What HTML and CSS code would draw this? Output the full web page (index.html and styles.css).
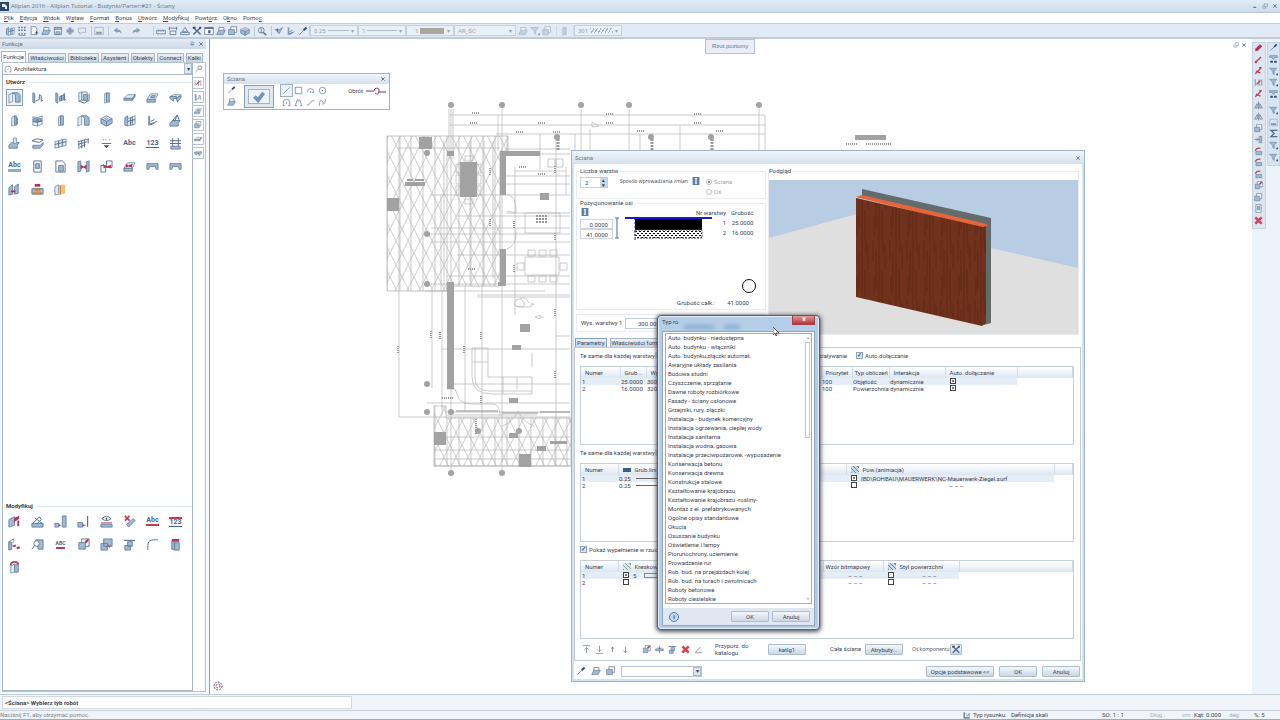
FILE: index.html
```html
<!DOCTYPE html>
<html lang="pl">
<head>
    <meta charset="UTF-8">
    <meta name="viewport" content="width=device-width, initial-scale=1.0">
    <title>Allplan 2016 - Ściany</title>
    <link rel="stylesheet" href="styles.css">
</head>
<body>
    <!-- icon set -->
    <svg class="defs" aria-hidden="true">
        <symbol id="wall" viewBox="0 0 14 14"><path class="p" d="M1 4l4-2v9l-4 2z"/><path class="b" d="M5 2h6l2 2v8h-5V4z"/></symbol>
        <symbol id="poly" viewBox="0 0 14 14"><path class="b" d="M2 2l2 1v10l-2-1z"/><path class="l" d="M5 11l4-2V4l2 1v6l2-1"/></symbol>
        <symbol id="polywin" viewBox="0 0 14 14"><path class="b" d="M2 2l2 1v10l-2-1zM6 6l5-2v5l-5 2z"/><path class="l" d="M11 2v8l2-1M8 5v5"/></symbol>
        <symbol id="frame" viewBox="0 0 14 14"><path class="p" d="M2 2l3-1v9l-3 1zM5 1h6v9H5z"/><path class="b" d="M7 4h4v6H7z"/><path class="l" d="M2 11l6 2 5-3V3"/></symbol>
        <symbol id="column" viewBox="0 0 14 14"><path class="p" d="M5 3l2-1v10l-2 1z"/><path class="b" d="M7 2h3v10H7z"/></symbol>
        <symbol id="slab" viewBox="0 0 14 14"><path class="p" d="M1 8l4-4h8l-3 4z"/><path class="b" d="M1 8h9v2H1zM10 8l3-4v2l-3 4z"/></symbol>
        <symbol id="slabhole" viewBox="0 0 14 14"><path class="p" d="M1 9l4-6h8l-3 6z"/><path class="b" d="M1 9h9v3H1zM5 7l1-2h4L9 7z"/></symbol>
        <symbol id="beam" viewBox="0 0 14 14"><path class="p" d="M1 6l4-2h8L9 7z"/><path class="b" d="M1 6h7v2H5v3L1 8zM8 8l5-3v2l-4 5z"/></symbol>
        <symbol id="door" viewBox="0 0 14 14"><path class="p" d="M4 4l3-2v10l-3 1z"/><path class="b" d="M7 2h2v10H7z"/><path class="l" d="M10 4v7"/></symbol>
        <symbol id="window" viewBox="0 0 14 14"><path class="p" d="M2 3l5 1v9l-5-1zM7 4l5-2v9l-5 2z"/><path class="b" d="M3 5h3v3H3zM8 5h3v3H8z"/><path class="l" d="M2 8l5 1 5-2"/></symbol>
        <symbol id="cube" viewBox="0 0 14 14"><path class="p" d="M1 5l6-3 6 3-6 3z"/><path class="b" d="M1 5l6 3v5l-6-3zM13 5l-6 3v5l6-3z"/><path class="p" d="M5 5l2-1 2 1-2 1z"/></symbol>
        <symbol id="facade" viewBox="0 0 14 14"><path class="b" d="M2 4l3-2v11l-3-1z"/><path class="p" d="M5 5l8-3v9l-8 2z"/><path class="l" d="M8 4v8M10 3v9M5 8l8-2"/></symbol>
        <symbol id="corner" viewBox="0 0 14 14"><path class="b" d="M3 2l1 1v7l-1 2z"/><path class="l" d="M4 11l8-3M5 8l4-2M4 12l5-2"/></symbol>
        <symbol id="roof" viewBox="0 0 14 14"><path class="b" d="M1 10l3-3h8l-2 3v3H1z"/><path class="l" d="M3 8l6-7 2 6M9 1L6 8"/></symbol>
        <symbol id="found" viewBox="0 0 14 14"><path class="b" d="M1 9l3-3h8l-2 3v3H1z"/><path class="p" d="M6 1h3v6H6z"/></symbol>
        <symbol id="plate" viewBox="0 0 14 14"><path class="l" d="M1 4l5-2 7 1-4 3z"/><path class="b" d="M2 9h8l3-3v2l-3 4H2z"/></symbol>
        <symbol id="mesh" viewBox="0 0 14 14"><path class="p" d="M1 5l12-3v7L1 12z"/><path class="l" d="M1 8l12-3M5 4v7M9 3v7"/></symbol>
        <symbol id="mesh2" viewBox="0 0 14 14"><path class="l" d="M1 5l12-3M1 8l10-3M2 5v8M5 4v8M8 3v8M12 2v5M3 11l6-3"/></symbol>
        <symbol id="level" viewBox="0 0 14 14"><path class="l" d="M2 7h10M3 3h1M6 3h1M10 3h1"/><path class="k" d="M4 9h6l-3 3z"/></symbol>
        <symbol id="grid" viewBox="0 0 14 14"><path class="l" d="M4 1v9M10 1v9M1 4h12M1 7h12"/><path class="b" d="M2 10h10v3H2z"/></symbol>
        <symbol id="sheet" viewBox="0 0 14 14"><path class="w" d="M3 1h8v12H3z"/><path class="b" d="M5 4h4v5H5z"/></symbol>
        <symbol id="sheet2" viewBox="0 0 14 14"><path class="w" d="M2 1h7l3 3v9H2z"/><path class="b" d="M5 6h5v6H5z"/></symbol>
        <symbol id="link" viewBox="0 0 14 14"><path class="b" d="M1 2l3-1v11l-3 1zM10 2l3-1v11l-3 1z"/><path class="r" d="M4 5l3 2 3-2v5L7 8l-3 2z"/></symbol>
        <symbol id="link2" viewBox="0 0 14 14"><path class="w" d="M7 1h6v7H7zM1 6h5v7H1z"/><path class="r" d="M3 4l4 3 5-2v4L7 8 4 9z"/></symbol>
        <symbol id="link3" viewBox="0 0 14 14"><path class="p" d="M1 9l4-6h8l-3 6z"/><path class="b" d="M1 9h9v3H1z"/><path class="r" d="M3 4l3 2 4-2v4L6 7 3 8z"/></symbol>
        <symbol id="bridge" viewBox="0 0 14 14"><path class="b" d="M1 4h12v6h-2l-1-3H4l-1 3H1z"/></symbol>
        <symbol id="wallred" viewBox="0 0 14 14"><path class="b" d="M1 5l4-3v10l-4 1zM7 4l4-3v10l-4 1z"/><path class="r" d="M3 8h5v2H3z"/></symbol>
        <symbol id="brick" viewBox="0 0 14 14"><path class="r" d="M4 1h6v3H4z"/><path class="b" d="M1 6h12v6H1z"/><path class="o" d="M4 6h6v3H4zM2 10h10v2H2z"/></symbol>
        <symbol id="layers" viewBox="0 0 14 14"><path class="p" d="M1 4l4-2v10l-4 1z"/><path class="o" d="M6 3l2-1v10l-2 1z"/><path class="y" d="M8 2h4v9l-4 1z"/></symbol>
        <symbol id="wallmod" viewBox="0 0 14 14"><path class="b" d="M1 5l6-3v9l-6 2z"/><path class="r" d="M7 3l5-2v3L6 8zM10 6h2v6h-2z"/></symbol>
        <symbol id="wallmod2" viewBox="0 0 14 14"><path class="p" d="M1 4l5-3v3L4 6v4l-3 3z"/><path class="b" d="M1 4l3 1v7l-3 1z"/><path class="r" d="M5 8l3-1 1 2-3 1zM9 10l3-1 1 2-3 1z"/></symbol>
        <symbol id="rebuild" viewBox="0 0 14 14"><path class="b" d="M1 9h12v4H1z"/><path class="l" d="M1 10l8-8 2 3-5 5M4 3l8 6"/></symbol>
        <symbol id="stretch" viewBox="0 0 14 14"><path class="b" d="M9 1h4v12H9zM1 9h4v4H1z"/><path class="r" d="M5 10l3 1-3 1z"/></symbol>
        <symbol id="stretch2" viewBox="0 0 14 14"><path class="k" d="M11 1h1v12h-1z"/><path class="b" d="M1 8h5v5H1z"/><path class="r" d="M6 10l4 1-4 1z"/></symbol>
        <symbol id="eye" viewBox="0 0 14 14"><path class="l" d="M2 4q5-5 10 0-5 4-10 0"/><circle class="k" cx="7" cy="4" r="1"/><path class="r" d="M1 8h12v1H1z"/><path class="b" d="M1 10h12v3H1z"/></symbol>
        <symbol id="delmesh" viewBox="0 0 14 14"><path class="rl" d="M2 1l5 5M7 1L2 6"/><path class="b" d="M4 10l7-6 2 2-7 7z"/></symbol>
        <symbol id="find" viewBox="0 0 14 14"><path class="b" d="M5 2h8v10H8z"/><circle class="w" cx="6" cy="6" r="3"/><path class="l" d="M4 8l-3 4"/></symbol>
        <symbol id="merge" viewBox="0 0 14 14"><path class="w" d="M5 1h8v8H5z"/><path class="b" d="M2 5h7v7H2z"/><path class="r" d="M8 4l3-3 2 1-3 4z"/></symbol>
        <symbol id="split" viewBox="0 0 14 14"><path class="b" d="M4 1h9v8H4zM1 6h7v7H1z"/><path class="r" d="M7 5l3 4 2-3-2 5z"/></symbol>
        <symbol id="axis" viewBox="0 0 14 14"><path class="k" d="M1 2h12v1H1z"/><path class="b" d="M5 4h5v5H5zM2 8h6v5H2z"/></symbol>
        <symbol id="arc" viewBox="0 0 14 14"><path class="l" d="M2 13V8q0-6 6-6h5"/></symbol>
        <symbol id="walltop" viewBox="0 0 14 14"><path class="r" d="M3 1h8v3H3z"/><path class="b" d="M3 4l3 1v8l-3-1zM6 5h5v8H6z"/></symbol>
        <symbol id="arch" viewBox="0 0 14 14"><path class="rl" d="M3 5q0-4 4-4t4 3"/><path class="p" d="M3 6l4-3v9l-4 1z"/><path class="b" d="M7 4h4v8H7z"/></symbol>
        <symbol id="dropper" viewBox="0 0 14 14"><path class="l" d="M2 12l6-6"/><path class="k" d="M7 5l4-4 2 2-4 4z"/></symbol>
        <symbol id="open" viewBox="0 0 14 14"><path class="w" d="M4 2h7v7H4z"/><path class="b" d="M1 12l3-6h9l-3 6z"/></symbol>
        <symbol id="save" viewBox="0 0 14 14"><path class="w" d="M2 2h10v10H2z"/><path class="b" d="M4 8h6v4H4zM2 2h10v3H2z"/></symbol>
        <symbol id="new" viewBox="0 0 14 14"><path class="w" d="M3 1h6l2 3v8H3z"/><path class="k" d="M8 9h5v1H8zM10 7h1v5h-1z"/></symbol>
        <symbol id="dots" viewBox="0 0 14 14"><path class="d" d="M2 2h10M2 6h10M2 11h10"/><path class="l" d="M2 13h10"/></symbol>
        <symbol id="plus" viewBox="0 0 14 14"><path class="g" d="M5 2h4v3h3v4H9v3H5V9H2V5h3z"/></symbol>
        <symbol id="note" viewBox="0 0 14 14"><path class="gl" d="M2 3h10v6H7l-3 3V9H2z"/></symbol>
        <symbol id="img" viewBox="0 0 14 14"><path class="gl" d="M1 2h12v10H1z"/><path class="g" d="M3 8h8v3H3z"/></symbol>
        <symbol id="undo" viewBox="0 0 14 14"><path class="g" d="M1 6l5-4v3q6 0 6 6-2-3-6-3v2z"/></symbol>
        <symbol id="redo" viewBox="0 0 14 14"><path class="g" d="M13 6L8 2v3q-6 0-6 6 2-3 6-3v2z"/></symbol>
        <symbol id="ruler" viewBox="0 0 14 14"><path class="l" d="M1 6h12v5H1zM4 6v2M7 6v2M10 6v2"/></symbol>
        <symbol id="scale" viewBox="0 0 14 14"><path class="t" d="M2 2v10h10"/><path class="l" d="M5 4l3 5 3-5v6"/></symbol>
        <symbol id="dims" viewBox="0 0 14 14"><path class="l" d="M1 3h12M2 1v5M12 1v5M3 7h8v5H3z"/></symbol>
        <symbol id="tri" viewBox="0 0 14 14"><path class="l" d="M7 2l4 6H3zM1 9h12v3H1z"/></symbol>
        <symbol id="tools" viewBox="0 0 14 14"><path class="t" d="M2 2l10 10M12 2L2 12"/><path class="k" d="M1 1h4v3H1zM10 1h3v3h-3z"/></symbol>
        <symbol id="win" viewBox="0 0 14 14"><path class="w" d="M1 2h12v10H1z"/><path class="k" d="M1 2h12v2H1zM6 6h3v4H6z"/></symbol>
        <symbol id="copy" viewBox="0 0 14 14"><path class="w" d="M4 1h8v8H4z"/><path class="b" d="M1 5h8v7H1z"/></symbol>
        <symbol id="magnify" viewBox="0 0 14 14"><circle class="l" cx="6" cy="6" r="4"/><path class="t" d="M9 9l4 4"/><path class="l" d="M6 3v6h3"/></symbol>
        <symbol id="key" viewBox="0 0 14 14"><circle class="l" cx="9" cy="5" r="3"/><path class="l" d="M7 7l-5 5"/></symbol>
        <symbol id="brush" viewBox="0 0 14 14"><path class="b" d="M3 6l4 5 5-9-4 3z"/><path class="l" d="M1 5h5M5 3v5"/></symbol>
        <symbol id="check" viewBox="0 0 14 14"><path class="c" d="M2 7l4 4 6-8"/></symbol>
        <symbol id="line" viewBox="0 0 14 14"><path class="l" d="M2 12L12 2"/></symbol>
        <symbol id="rect" viewBox="0 0 14 14"><path class="l" d="M2 2h10v10H2z"/></symbol>
        <symbol id="arc2" viewBox="0 0 14 14"><path class="l" d="M2 10q0-6 5-6t5 6H9"/><circle class="k" cx="7" cy="9" r="1"/></symbol>
        <symbol id="circ" viewBox="0 0 14 14"><circle class="l" cx="7" cy="7" r="5"/><circle class="k" cx="7" cy="7" r="1"/></symbol>
        <symbol id="home" viewBox="0 0 14 14"><path class="l" d="M2 12V6q0-4 5-4t5 4v6H9M2 12h3M7 6v3"/></symbol>
        <symbol id="trap" viewBox="0 0 14 14"><path class="l" d="M1 12h4M2 12L5 3h4l3 9H9M6 6h2"/></symbol>
        <symbol id="curve" viewBox="0 0 14 14"><path class="l" d="M1 11q4 1 5-3t7-4"/></symbol>
        <symbol id="spline" viewBox="0 0 14 14"><path class="l" d="M2 12Q3 1 6 4t2 6q3-1 4-8"/></symbol>
        <symbol id="filter" viewBox="0 0 14 14"><path class="b" d="M1 2h11L8 7v5L6 10V7z"/><path class="k" d="M12 10h2v3h-3z"/></symbol>
        <symbol id="filter2" viewBox="0 0 14 14"><path class="b" d="M1 1h12v3H9l-2 3-3-3H1z"/><path class="k" d="M2 9h4v3H2zM8 9h4v3H8z"/></symbol>
        <symbol id="sigma" viewBox="0 0 14 14"><path class="t" d="M12 3V2H3l5 5-5 5h9v-1"/></symbol>
        <symbol id="pencil" viewBox="0 0 14 14"><path class="r" d="M2 9l7-7 4 3-7 7-4 1z"/></symbol>
        <symbol id="cut" viewBox="0 0 14 14"><path class="rl" d="M2 12l9-9M8 3l4-1M3 8l7 3"/></symbol>
        <symbol id="redline" viewBox="0 0 14 14"><path class="rl" d="M3 11l8-8"/><circle class="rl" cx="3" cy="11" r="1"/></symbol>
        <symbol id="trim" viewBox="0 0 14 14"><path class="l" d="M2 2v10M12 2v10M8 2v10"/><path class="rl" d="M4 10l6-6"/></symbol>
        <symbol id="mirror" viewBox="0 0 14 14"><path class="l" d="M7 1v12M5 4v7H1zM9 4v7h4z"/></symbol>
        <symbol id="move" viewBox="0 0 14 14"><path class="b" d="M8 2h4v10H8z"/><path class="l" d="M1 7h6M4 5l3 2-3 2"/></symbol>
        <symbol id="rot" viewBox="0 0 14 14"><path class="rl" d="M2 6q2-5 8-4"/><path class="b" d="M3 7h9v5H3z"/></symbol>
        <symbol id="xred" viewBox="0 0 14 14"><path class="xr" d="M2 2l10 10M12 2L2 12"/></symbol>
        <symbol id="top" viewBox="0 0 14 14"><path class="l" d="M1 1h12M7 13V4M4 7l3-3 3 3"/></symbol>
        <symbol id="bottom" viewBox="0 0 14 14"><path class="l" d="M1 13h12M7 1v9M4 7l3 3 3-3"/></symbol>
        <symbol id="up" viewBox="0 0 14 14"><path class="l" d="M7 11V3M5 6l2-3 2 3"/></symbol>
        <symbol id="down" viewBox="0 0 14 14"><path class="l" d="M7 3v9M4 9l3 3 3-3"/></symbol>
        <symbol id="ins" viewBox="0 0 14 14"><path class="b" d="M1 6h12v3H1z"/><path class="l" d="M7 1v5M4 4l3 2 3-2M7 9v4"/></symbol>
        <symbol id="angle" viewBox="0 0 14 14"><path class="l" d="M12 12H2l8-9"/></symbol>
        <symbol id="info" viewBox="0 0 14 14"><path class="i" d="M1 0h12v14H1z"/><path class="wf" d="M5 2h4v2H8v6h1v2H5v-2h1V4H5z"/></symbol>
        <symbol id="x" viewBox="0 0 14 14"><path class="t" d="M3 3l8 8M11 3l-8 8"/></symbol>
        <symbol id="restore" viewBox="0 0 14 14"><path class="l" d="M5 2h8v6H5zM2 5v7h7V8"/></symbol>
        <symbol id="minimize" viewBox="0 0 14 14"><path class="k" d="M3 9h7v2H3z"/></symbol>
        <symbol id="pin" viewBox="0 0 14 14"><path class="l" d="M5 2h5v6H5zM3 8h9M7 8v5"/></symbol>
    </svg>

    <header class="titlebar">
        <svg class="logo" viewBox="0 0 9 9"><path class="logo-bg" d="M0 0h9v9H0z"/><path class="logo-fg" d="M2 2h3l2 2v3H5V5H2z"/></svg>
        <h1>Allplan 2016 - Allplan Tutorial - Budynki/Parter:#21 - Ściany</h1>
        <div class="winbtns">
            <button aria-label="Minimalizuj"><svg><use href="#minimize"/></svg></button>
            <button aria-label="Przywróć"><svg><use href="#restore"/></svg></button>
            <button aria-label="Zamknij"><svg><use href="#x"/></svg></button>
        </div>
    </header>
    <nav class="menubar">
        <a href="#"><u>P</u>lik</a><a href="#"><u>E</u>dycja</a><a href="#"><u>W</u>idok</a><a href="#">W<u>s</u>taw</a><a href="#"><u>F</u>ormat</a><a href="#"><u>B</u>onus</a><a href="#"><u>U</u>twórz</a><a href="#"><u>M</u>odyfikuj</a><a href="#">Powt<u>ó</u>rz</a><a href="#">O<u>k</u>no</a><a href="#">Pomo<u>c</u></a>
    </nav>
    <div class="toolbar">
        <div class="tools">
            <svg><use href="#facade"/></svg><svg><use href="#dots"/></svg><svg><use href="#new"/></svg><svg><use href="#open"/></svg><svg><use href="#save"/></svg><svg><use href="#plus"/></svg><svg><use href="#note"/></svg>
        </div>
        <div class="tools"><svg><use href="#img"/></svg></div>
        <div class="tools wide"><svg><use href="#undo"/></svg><svg><use href="#redo"/></svg></div>
        <div class="tools">
            <svg><use href="#ruler"/></svg><svg><use href="#dims"/></svg><svg><use href="#tri"/></svg><svg><use href="#tools"/></svg><svg><use href="#win"/></svg><svg><use href="#open"/></svg><svg><use href="#copy"/></svg><svg><use href="#cube"/></svg>
        </div>
        <div class="tools"><svg><use href="#magnify"/></svg></div>
        <div class="tools tight"><svg><use href="#brush"/></svg><svg><use href="#corner"/></svg><svg><use href="#dropper"/></svg></div>
        <div class="pen">0.25<i class="dash"></i><b>▾</b></div>
        <div class="pen">1<i class="dash"></i><b>▾</b></div>
        <div class="pen color">1<i class="swatch"></i><b>▾</b></div>
        <div class="pen layer">AR_ŚC<b>▾</b></div>
        <div class="tools faded"><svg><use href="#open"/></svg><svg><use href="#filter"/></svg><svg><use href="#copy"/></svg></div>
        <div class="tools faded"><svg><use href="#column"/></svg></div>
        <div class="pen">301<i class="zigzag"></i><b>▾</b></div>
    </div>

    <main class="workspace">
        <aside class="palette">
            <header class="palette-title"><span>Funkcje</span><svg><use href="#pin"/></svg><svg><use href="#x"/></svg></header>
            <div class="tabs">
                <button class="active">Funkcje</button><button>Właściwości</button><button>Biblioteka</button><button>Asystent</button><button>Obiekty</button><button>Connect</button><button>Kalki</button>
            </div>
            <div class="palette-body">
                <div class="palette-main">
                    <div class="module"><svg><use href="#home"/></svg><select aria-label="Moduł"><option>Architektura</option></select><span class="arrow">▾</span></div>
                    <section class="group create">
                        <h2>Utwórz</h2>
                        <div class="icons">
                            <button class="pressed" aria-label="Ściana"><svg><use href="#wall"/></svg></button>
                            <svg><use href="#poly"/></svg><svg><use href="#polywin"/></svg><svg><use href="#frame"/></svg><svg><use href="#column"/></svg><svg><use href="#slab"/></svg><svg><use href="#slabhole"/></svg><svg><use href="#beam"/></svg>
                            <svg><use href="#door"/></svg><svg><use href="#window"/></svg><svg><use href="#column"/></svg><svg><use href="#wall"/></svg><svg><use href="#cube"/></svg><svg><use href="#facade"/></svg><svg><use href="#corner"/></svg><svg><use href="#roof"/></svg>
                            <svg><use href="#found"/></svg><svg><use href="#plate"/></svg><svg><use href="#mesh"/></svg><svg><use href="#mesh2"/></svg><svg><use href="#level"/></svg><span class="glyph">Abc</span><span class="glyph num">123</span><svg><use href="#grid"/></svg>
                            <span class="glyph boxed">Abc</span><svg><use href="#sheet"/></svg><svg><use href="#sheet2"/></svg><svg><use href="#link"/></svg><svg><use href="#link2"/></svg><svg><use href="#link3"/></svg><svg><use href="#bridge"/></svg><svg><use href="#bridge"/></svg>
                            <svg><use href="#wallred"/></svg><svg><use href="#brick"/></svg><svg><use href="#layers"/></svg>
                        </div>
                    </section>
                    <section class="group">
                        <h2>Modyfikuj</h2>
                        <div class="icons">
                            <svg><use href="#wallmod"/></svg><svg><use href="#rebuild"/></svg><svg><use href="#stretch"/></svg><svg><use href="#stretch2"/></svg><svg><use href="#eye"/></svg><svg><use href="#delmesh"/></svg><span class="glyph marked">Abc</span><span class="glyph num struck">123</span>
                            <svg><use href="#wallmod2"/></svg><svg><use href="#find"/></svg><span class="glyph small marked">ABC</span><svg><use href="#merge"/></svg><svg><use href="#split"/></svg><svg><use href="#axis"/></svg><svg><use href="#arc"/></svg><svg><use href="#walltop"/></svg>
                            <svg><use href="#arch"/></svg>
                        </div>
                    </section>
                </div>
                <div class="palette-side">
                    <svg class="plain"><use href="#key"/></svg><svg><use href="#trim"/></svg><svg><use href="#poly"/></svg><svg><use href="#slabhole"/></svg><svg><use href="#copy"/></svg><svg><use href="#slab"/></svg><svg><use href="#beam"/></svg>
                </div>
            </div>
        </aside>

        <div class="canvas">
            <svg class="plan" viewBox="210 38 1042 657" preserveAspectRatio="xMinYMin slice">
                <defs>
                    <pattern id="deck" width="12" height="24" patternUnits="userSpaceOnUse">
                        <path d="M0 0L12 24M12 0L0 24M3 0v24" class="pl"/>
                    </pattern>
                </defs>
                <!-- terraces -->
                <path class="deck" d="M387 135h121v15h-8v135h-53v5h-60zM434 405h12v12h125v48H434z"/>
                <!-- axes and dimension lines -->
                <path class="pl" d="M451 108v362M502 108v362M581 108v42M629 108v42M759 108v42M449 114h316M449 124h316M496 133h269M449 108v50M453 108v50M498 114v36M540 133v36M575 133v17M590 128v22M640 133v17M680 124v26M765 114v36M592 121l7 4-7 1z"/>
                <path class="pl" d="M506 148h64M540 153h30M556 138v327M515 166v148M515 170h50M504 175h66M504 183h66M566 166v28M431 194h139M506 212h64M457 215h113M431 227h139M431 233h139M431 241h139M457 254h113M447 275h123M425 283h145M425 290h120M477 294h93M477 296h93M465 285v125M482 285v145M442 290v125M399 290v126M399 416h171M432 290v97M441 348h129M453 383h117M427 402h143M446 411h124M446 414h91M434 436h136M434 449h136M434 458h136M434 465h136M556 335h14M400 135v155M444 140v145M398 147h102M441 194v96M470 140v140M484 140v145M493 140v137"/>
                <path class="pl thick" d="M502 412h36M456 410h42M540 411h30"/>
                <path class="pl" d="M447 388h8l4 10q4 5 14 5h20q7 0 7 12"/>
                <!-- walls -->
                <path class="solid" d="M500 150h40v5h-34v39h-6zM500 248h6v37h-8v-4h2zM447 281h7v107h-7z"/>
                <!-- solid fills -->
                <path class="solid" d="M419 136h13v12h-13zM387 197h12v13h-12zM460 161h17v35h-17zM540 192h9v7h-9zM520 323h10v8h-10zM512 344h9v5h-9zM509 397h9v5h-9zM434 431h12v13h-12zM519 453h12v13h-12zM509 432h9v5h-9zM537 445h9v5h-9zM855 134h31v5h-31zM407 178h6v2h-6zM415 178h9v2h-9zM405 181h20v4h-20zM447 150h7v5h-7zM550 440h17v3h-17z"/>
                <g class="solid"><circle cx="451" cy="104" r="3"/><circle cx="502" cy="104" r="3"/><circle cx="581" cy="104" r="3"/><circle cx="629" cy="104" r="3"/><circle cx="759" cy="104" r="3"/><circle cx="427" cy="152" r="3"/><circle cx="427" cy="233" r="3"/><circle cx="427" cy="283" r="3"/><circle cx="427" cy="383" r="3"/><circle cx="427" cy="411" r="3"/><circle cx="451" cy="411" r="3"/><circle cx="451" cy="472" r="3"/><circle cx="502" cy="472" r="3"/><circle cx="519" cy="430" r="3"/><circle cx="557" cy="136" r="3"/><circle cx="651" cy="136" r="3"/><circle cx="711" cy="136" r="3"/><circle cx="478" cy="430" r="3"/></g>
                <path class="marks" d="M472 112h7M470 122h7M538 122h7M516 131h7M553 131h7M606 113h8M694 113h8M606 122h8M694 122h8M519 166h7M538 173h7M637 130h8M716 130h8M846 143h12M866 143h26M398 345v7M431 330v7M440 331v7M464 345v7M481 331v7M481 395v7M555 308v7M555 370v7M514 220v8M514 264v8M490 167v7M490 218v7M555 165v7M555 232v7M468 268h8M442 397h12M476 418v16"/>
                <path class="marks heavy" d="M558 138v12M652 138v12M712 138v12"/>
                <!-- furniture -->
                <path class="pl" d="M456 163h4v9h-4zM456 174h4v9h-4zM456 185h4v9h-4zM477 163h4v9h-4zM477 174h4v9h-4zM477 185h4v9h-4zM465 155h8v5h-8zM465 198h8v5h-8zM525 212h35v20h-35zM548 158h7v8h-7zM556 158h7v8h-7zM525 256h34v18h-34zM528 249h7v6h-7zM539 249h7v6h-7zM550 249h7v6h-7zM528 275h7v6h-7zM539 275h7v6h-7zM550 275h7v6h-7zM517 262h7v7h-7zM560 262h7v7h-7z"/>
                <path class="pl" d="M472 347h16v29h44v17h-40q-20 0-20-17zM472 361h16M475 347v30q0 13 15 13h42M503 376v17M517 376v12M532 352v14"/>
                <path class="pl" d="M507 193q10 3 9 19l-9-2M507 248q10-3 9-19M502 425q10-3 16-15q6 12 16 15"/>
                <path class="pl" d="M516 299q-5 7 6 7h8l4-3h-4M516 299q6-3 8 3t-8 3M520 297h6l3 5M535 316l5-2v4zM540 316h4"/>
                <path class="marks heavy grid-fill" d="M536 215h11M536 218h11M536 221h11"/>
            </svg>
            <span class="view-label">Rzut poziomy</span>
            <div class="view-btns"><svg><use href="#restore"/></svg><svg><use href="#x"/></svg></div>
            <svg class="origin" viewBox="0 0 10 10"><circle cx="5" cy="5" r="4"/><circle class="mid" cx="5" cy="5" r="2"/></svg>
        </div>

        <aside class="rightbars">
            <div class="vbar edit">
                <svg><use href="#pencil"/></svg><svg><use href="#redline"/></svg><svg><use href="#cut"/></svg><svg><use href="#trim"/></svg><svg><use href="#cut"/></svg><svg><use href="#mirror"/></svg><svg><use href="#mirror"/></svg><svg><use href="#copy"/></svg><svg><use href="#move"/></svg><svg><use href="#rot"/></svg><svg><use href="#rot"/></svg><svg><use href="#rot"/></svg><svg><use href="#merge"/></svg><svg><use href="#copy"/></svg><svg><use href="#sheet"/></svg><svg><use href="#xred"/></svg>
            </div>
            <div class="vbar filters">
                <svg><use href="#dropper"/></svg><svg><use href="#filter2"/></svg><svg><use href="#filter"/></svg><svg><use href="#filter"/></svg><svg><use href="#filter2"/></svg><svg class="split"><use href="#filter"/></svg><svg><use href="#img"/></svg><svg><use href="#sigma"/></svg><svg><use href="#filter"/></svg><svg><use href="#filter"/></svg>
            </div>
        </aside>

        <!-- floating wall toolbar -->
        <section class="float wall-tools">
            <header>Ściana<svg><use href="#x"/></svg></header>
            <div class="wall-tools-body">
                <div class="stack"><svg><use href="#dropper"/></svg><svg><use href="#open"/></svg></div>
                <button class="apply" aria-label="Właściwości"><svg><use href="#check"/></svg></button>
                <div class="shapes">
                    <svg class="on"><use href="#line"/></svg><svg><use href="#rect"/></svg><svg><use href="#arc2"/></svg><svg><use href="#circ"/></svg>
                    <svg><use href="#home"/></svg><svg><use href="#trap"/></svg><svg><use href="#curve"/></svg><svg><use href="#spline"/></svg>
                </div>
                <span class="rotate">Obrót <svg viewBox="0 0 20 8"><path d="M0 4h8M12 5h8" class="bar"/><path d="M8 4q0-3 3-3t2 4-4 1" class="turn"/></svg></span>
            </div>
        </section>

        <!-- wall properties -->
        <section class="float wall-dialog">
            <header>Ściana<svg><use href="#x"/></svg></header>
            <div class="top">
                <div class="settings">
                    <fieldset class="count">
                        <legend>Liczba warstw</legend>
                        <div class="spinner"><input type="text" value="2" aria-label="Liczba warstw"><span><b>▴</b><b>▾</b></span></div>
                        <span>Sposób wprowadzania zmian</span>
                        <svg class="info"><use href="#info"/></svg>
                        <div class="radios"><label><input type="radio" name="mode" checked disabled>Ściana</label><label><input type="radio" name="mode" disabled>Oś</label></div>
                    </fieldset>
                    <fieldset class="position">
                        <legend>Pozycjonowanie osi</legend>
                        <div class="axis">
                            <div class="offsets">
                                <svg class="info"><use href="#info"/></svg>
                                <input type="text" value="0.0000" aria-label="Odsunięcie"><input type="text" value="41.0000" aria-label="Grubość">
                            </div>
                            <svg class="section" viewBox="0 0 102 32">
                                <defs><pattern id="dotted" width="4" height="4" patternUnits="userSpaceOnUse"><path d="M0 0h2v1H0zM2 2h2v1H2z"/></pattern></defs>
                                <path class="l" d="M4 5v20M2 5h4M2 25h4"/>
                                <path d="M22 6h67v11H22z"/>
                                <path class="dots" d="M22 17h67v8H22z"/>
                                <path class="blue" d="M12 5h87"/><path class="blue side" d="M22 5v22"/>
                            </svg>
                            <table class="layers">
                                <tr><th>Nr warstwy</th><th>Grubość</th></tr>
                                <tr><td>1</td><td>25.0000</td></tr>
                                <tr><td>2</td><td>16.0000</td></tr>
                            </table>
                        </div>
                        <div class="ring"></div>
                        <p class="total"><span>Grubość całk.:</span><span>41.0000</span></p>
                    </fieldset>
                    <div class="height"><label for="h1">Wys. warstwy 1</label><input id="h1" type="text" value="300.0000"></div>
                </div>
                <fieldset class="preview">
                    <legend>Podgląd</legend>
                    <svg viewBox="0 0 309 154" preserveAspectRatio="none">
                        <defs>
                            <pattern id="wood" width="17" height="60" patternUnits="userSpaceOnUse">
                                <path class="wood" d="M0 0h17v60H0z"/>
                                <path class="grain" d="M2 0v22M5 10v40M8 0v60M11 30v30M14 5v24M12 0v14M3 36v20"/>
                            </pattern>
                        </defs>
                        <path class="sky" d="M0 0h309v154H0z"/>
                        <path class="ground" d="M0 58l88-24 134 34 87 20v66H0z"/>
                        <path class="concrete" d="M93 9l129 29v105l-7 2V46L93 18z"/>
                        <path class="orange" d="M87 17l6-2 125 29v2l-6 2z"/>
                        <path class="woodface" d="M87 18l127 29 3-1v97l-4 3-126-29z"/>
                    </svg>
                </fieldset>
            </div>
            <div class="tabs"><button class="active">Parametry</button><button>Właściwości format.</button></div>
            <div class="panel">
                <div class="caption"><span class="same">Te same dla każdej warstwy</span><i class="box"></i><span class="react">Oddziaływanie</span><label><input type="checkbox" checked>Auto.dołączanie</label></div>
                <div class="grid">
                    <table>
                        <colgroup><col class="w39"><col class="w26"><col class="w175"><col class="w31"><col class="w37"><col class="w56"><col class="w72"><col></colgroup>
                        <thead><tr><th>Numer</th><th>Grub...</th><th>Wys.</th><th>Priorytet</th><th class="snug">Typ obliczeń</th><th>Interakcja</th><th>Auto. dołączanie</th><th></th></tr></thead>
                        <tbody>
                            <tr class="sel"><td>1</td><td>25.0000</td><td>300.0000</td><td>100</td><td>Objętość</td><td>dynamicznie</td><td><input type="checkbox" class="tick dot" aria-label="Auto. dołączanie 1" checked></td><td></td></tr>
                            <tr><td>2</td><td>16.0000</td><td>320.0000</td><td>100</td><td>Powierzchnia</td><td>dynamicznie</td><td><input type="checkbox" class="tick dot" aria-label="Auto. dołączanie 2" checked></td><td></td></tr>
                        </tbody>
                    </table>
                </div>
                <div class="caption"><span class="same">Te same dla każdej warstwy</span><i class="box"></i></div>
                <div class="grid">
                    <table>
                        <colgroup><col class="w37"><col class="w228"><col class="w208"><col></colgroup>
                        <thead><tr><th>Numer</th><th><i class="lines"></i>Grub.lini</th><th><i class="hatch"></i>Pow.(animacja)</th><th></th></tr></thead>
                        <tbody>
                            <tr class="sel"><td>1</td><td><span class="stroke">0.25</span></td><td><input type="checkbox" class="tick dot" aria-label="Powierzchnia 1" checked>IBD\ROHBAU\MAUERWERK\NC-Mauerwerk-Ziegel.surf</td><td></td></tr>
                            <tr><td>2</td><td><span class="stroke">0.25</span></td><td><input type="checkbox" class="tick" aria-label="Powierzchnia 2"><span class="none far">– – –</span></td><td></td></tr>
                        </tbody>
                    </table>
                </div>
                <div class="caption"><label><input type="checkbox" checked>Pokaż wypełnienie w rzucie</label></div>
                <div class="grid">
                    <table>
                        <colgroup><col class="w37"><col class="w205"><col class="w60"><col class="w76"><col></colgroup>
                        <thead><tr><th>Numer</th><th><i class="hatch green"></i>Kreskowanie</th><th class="snug">Wzór bitmapowy</th><th><i class="hatch"></i>Styl powierzchni</th><th></th></tr></thead>
                        <tbody>
                            <tr class="sel"><td>1</td><td><input type="checkbox" class="tick dot" aria-label="Kreskowanie 1" checked>5<i class="sample"></i></td><td><span class="none">– – –</span></td><td><input type="checkbox" class="tick" aria-label="Styl 1"><span class="none">– – –</span></td><td></td></tr>
                            <tr><td>2</td><td><input type="checkbox" class="tick" aria-label="Kreskowanie 2"><span class="none">– – –</span></td><td><span class="none">– – –</span></td><td><input type="checkbox" class="tick" aria-label="Styl 2"><span class="none">– – –</span></td><td></td></tr>
                        </tbody>
                    </table>
                </div>
                <div class="actions">
                    <div class="order"><svg><use href="#top"/></svg><svg><use href="#bottom"/></svg><svg><use href="#up"/></svg><svg><use href="#down"/></svg></div>
                    <div class="order"><svg><use href="#merge"/></svg><svg><use href="#ins"/></svg><svg><use href="#axis"/></svg><svg><use href="#xred"/></svg><svg><use href="#angle"/></svg></div>
                    <span class="catalog">Przyporz. do katalogu</span>
                    <button class="btn">katlg1</button>
                    <span class="whole">Cała ściana</span>
                    <button class="btn">Atrybuty...</button>
                    <span class="comp">Oś komponentu</span>
                    <button class="btn icon" aria-label="Oś komponentu"><svg><use href="#tools"/></svg></button>
                </div>
            </div>
            <footer>
                <svg><use href="#dropper"/></svg><svg><use href="#open"/></svg><svg><use href="#copy"/></svg>
                <div class="fav"><select aria-label="Ulubione"><option></option></select><span class="arrow">▾</span></div>
                <button class="btn long">Opcje podstawowe &lt;&lt;</button><button class="btn">OK</button><button class="btn">Anuluj</button>
            </footer>
        </section>

        <!-- trade picker -->
        <section class="float trade-dialog">
            <header><span>Typ ro</span><i class="ghost"></i><i class="ghost tiny"></i><button aria-label="Zamknij"><svg viewBox="0 0 14 14"><path class="wx" d="M4 3l6 8M10 3L4 11"/></svg></button></header>
            <div class="client">
                <div class="listbox">
                    <select size="30" aria-label="Typ robót">
                        <option>Auto. budynku - niedostępna</option>
                        <option>Auto. budynku - włączniki</option>
                        <option>Auto. budynku,złączki automat.</option>
                        <option>Awaryjne układy zasilania</option>
                        <option>Budowa studni</option>
                        <option>Czyszczenie, sprzątanie</option>
                        <option>Dawne roboty rozbiórkowe</option>
                        <option>Fasady - ściany osłonowe</option>
                        <option>Grzejniki, rury, złączki</option>
                        <option>Instalacja - budynek komercyjny</option>
                        <option>Instalacja ogrzewania, ciepłej wody</option>
                        <option>Instalacja sanitarna</option>
                        <option>Instalacja wodna, gazowa</option>
                        <option>Instalacje przeciwpożarowe, -wyposażenie</option>
                        <option>Konserwacja betonu</option>
                        <option>Konserwacja drewna</option>
                        <option>Konstrukcje stalowe</option>
                        <option>Kształtowanie krajobrazu</option>
                        <option>Kształtowanie krajobrazu -rośliny-</option>
                        <option>Montaż z el. prefabrykowanych</option>
                        <option>Ogólne opisy standardowe</option>
                        <option>Okucia</option>
                        <option>Osuszanie budynku</option>
                        <option>Oświetlenie i lampy</option>
                        <option>Piorunochrony, uziemienie</option>
                        <option>Prowadzenie rur</option>
                        <option>Rob. bud. na przejazdach kolej.</option>
                        <option>Rob. bud. na torach i zwrotnicach</option>
                        <option>Roboty betonowe</option>
                        <option>Roboty ciesielskie</option>
                    </select>
                    <div class="scroll"><b>▴</b><i></i><b>▾</b></div>
                </div>
                <div class="buttons"><span class="help">i</span><button class="btn">OK</button><button class="btn">Anuluj</button></div>
            </div>
        </section>
        <svg class="cursor" viewBox="0 0 6 10"><path d="M0 0v8l2-2 1 3 1-1-1-2h3z"/></svg>
    </main>

    <div class="prompt"><span>&lt;Ściana&gt; Wybierz tyb robót</span></div>
    <footer class="status">
        <span class="hint">Naciśnij F1, aby otrzymać pomoc.</span>
        <svg><use href="#scale"/></svg><span class="type">Typ rysunku:</span><span class="scale">Definicja skali</span><span class="ratio">SO: 1 : 1</span><span class="dim len">Dług.:</span><span class="dim cm">cm</span><span class="ang">Kąt: 0.000</span><span class="dim deg">deg</span><span class="pct">%: 5</span>
    </footer>
</body>
</html>
```

FILE: styles.css
```css
* {
    box-sizing: border-box;
}
body {
    margin: 0;
    height: 100vh;
    display: flex;
    flex-direction: column;
    overflow: hidden;
    background: #e6eef7;
    color: #3c4450;
    font: 6px/8px Roboto, "Noto Sans", sans-serif;
}
button, input, select {
    font: inherit;
    color: inherit;
    margin: 0;
    padding: 0;
    border: 0;
    background: none;
    border-radius: 0;
}
h1, h2, p, fieldset, legend {
    margin: 0;
    padding: 0;
    border: 0;
    font-size: 6px;
}
a {
    color: inherit;
    text-decoration: none;
}
svg {
    width: 10px;
    height: 10px;
    display: block;
    flex: none;
}
select {
    appearance: none;
    outline: none;
}
.defs {
    position: absolute;
    width: 0;
    height: 0;
}

/* icon paint */
.p { fill: #e2ebf4; stroke: #7d97b2; }
.b { fill: #a0bad3; stroke: #66829f; }
.l { fill: none; stroke: #4f6a88; }
.w { fill: #f8fafc; stroke: #60748a; }
.k { fill: #334e70; }
.r { fill: #b83255; }
.rl { fill: none; stroke: #c0405a; stroke-width: 2; }
.xr { fill: none; stroke: #d8405a; stroke-width: 4; }
.o { fill: #d9803a; }
.y { fill: #edc46a; }
.g { fill: #8d9caf; }
.gl { fill: none; stroke: #9aa8b8; }
.d { fill: none; stroke: #4a6583; stroke-width: 2; stroke-dasharray: 2 2; }
.t { fill: none; stroke: #566a80; stroke-width: 2; }
.c { fill: none; stroke: #7194bb; stroke-width: 4; }
.i { fill: #5f7e9f; }
.wf { fill: #fff; }
.wx { fill: none; stroke: #fff; stroke-width: 3; }

/* window frame */
.titlebar {
    display: flex;
    align-items: center;
    gap: 2px;
    height: 13px;
    flex: none;
    background: linear-gradient(#e2eef7, #cbdbea);
    border-bottom: 1px solid #b9c8d6;
}
.titlebar h1 {
    flex: 1;
    font-family: "Open Sans", sans-serif;
    font-weight: normal;
    color: #6a7783;
}
.logo {
    width: 9px;
    height: 9px;
}
.logo-bg { fill: #27496a; }
.logo-fg { fill: #e8f0f6; }
.winbtns {
    display: flex;
    gap: 4px;
    padding-right: 2px;
}
.winbtns svg {
    width: 6px;
    height: 6px;
}
.menubar {
    display: flex;
    align-items: center;
    gap: 6px;
    height: 10px;
    flex: none;
    padding-left: 4px;
    background: #fff;
}
.toolbar {
    display: flex;
    align-items: center;
    height: 16px;
    flex: none;
    padding-left: 3px;
    background: #e2ebf5;
    border-top: 1px solid #c3ced9;
    border-bottom: 2px solid #c0ccd8;
}
.tools {
    display: flex;
    gap: 2px;
    padding: 0 4px 0 2px;
    border-right: 1px solid #bccada;
}
.tools.wide {
    gap: 8px;
    padding: 0 12px 0 4px;
}
.tools.tight {
    padding-right: 1px;
}
.faded {
    opacity: 0.5;
}
.pen {
    display: flex;
    align-items: center;
    gap: 2px;
    width: 48px;
    height: 11px;
    padding: 0 3px;
    border: 1px solid #c5d1de;
    background: #e8eff7;
    color: #98a3af;
}
.pen b {
    margin-left: auto;
    font-weight: normal;
}
.pen.layer {
    width: 62px;
}
.pen.color {
    padding-left: 8px;
}
.dash {
    flex: 1;
    height: 1px;
    background: #b4bec9;
}
.swatch {
    width: 24px;
    height: 6px;
    background: #aaa79c;
}
.zigzag {
    flex: 1;
    height: 5px;
    background: repeating-linear-gradient(120deg, #a5afba 0 1px, #e8eff7 1px 3px);
}

/* work area */
.workspace {
    position: relative;
    flex: 1;
    display: flex;
    min-height: 0;
}
.palette {
    display: flex;
    flex-direction: column;
    width: 210px;
    flex: none;
    padding: 0 3px 2px 2px;
    background: #f4f8fc;
    border-right: 1px solid #8fa0b3;
}
.palette-title {
    display: flex;
    align-items: center;
    gap: 3px;
    height: 10px;
    margin: 0 0 2px -2px;
    padding: 0 2px;
    background: linear-gradient(#e2ebf4, #cbd9e8);
    color: #66727f;
}
.palette-title span {
    flex: 1;
}
.palette-title svg {
    width: 6px;
    height: 6px;
}
.tabs {
    display: flex;
    align-items: flex-end;
    gap: 2px;
}
.tabs button {
    flex: auto;
    height: 9px;
    border: 1px solid #a7b7c8;
    border-bottom: 0;
    background: linear-gradient(#eaf1f8, #c4d3e3);
}
.tabs .active {
    height: 11px;
    background: #fff;
}
.palette .tabs {
    margin-left: -1px;
    padding-right: 3px;
}
.palette-body {
    flex: 1;
    display: flex;
    border: 1px solid #b5c3d1;
    border-width: 1px 1px 1px 0;
    background: #fff;
}
.palette-main {
    flex: 1;
    display: flex;
    flex-direction: column;
    border: 1px solid #a9b9c9;
    border-top: 0;
}
.module {
    display: flex;
    align-items: center;
    height: 12px;
    padding-left: 1px;
    border-bottom: 1px solid #a9b9c9;
}
.module svg {
    width: 8px;
    height: 8px;
}
.module select {
    flex: 1;
    padding-left: 2px;
}
.arrow {
    width: 8px;
    align-self: stretch;
    display: flex;
    align-items: center;
    justify-content: center;
    border: 1px solid #aabccd;
    background: #dce7f2;
}
.group {
    padding: 3px 0;
}
.group h2 {
    display: flex;
    align-items: center;
    gap: 4px;
    padding-left: 3px;
    color: #333c46;
}
.group h2::after {
    content: "";
    flex: 1;
    height: 1px;
    background: #e0e7ee;
}
.create {
    height: 424px;
}
.icons {
    display: grid;
    grid-template-columns: repeat(8, 23px);
    grid-auto-rows: 23px;
    place-items: center;
}
.icons svg {
    width: 13px;
    height: 13px;
}
.icons .pressed {
    padding: 1px;
    border: 1px solid #8aa0b8;
    background: #eef3f8;
}
.glyph {
    font-size: 7px;
    line-height: 7px;
    font-weight: bold;
    color: #46648a;
}
.num {
    border-bottom: 1px solid #46648a;
}
.boxed {
    border-bottom: 3px solid #8facca;
}
.small {
    font-size: 5px;
}
.marked {
    border-bottom: 2px solid #c23a50;
}
.struck {
    border-top: 2px solid #c23a50;
}
.palette-side {
    width: 12px;
}
.palette-side svg {
    width: 11px;
    height: 12px;
    margin-bottom: 2px;
    padding: 1px;
    border: 1px solid #b6c3d0;
    border-left: 0;
}
.palette-side .plain {
    border: 0;
}

/* drawing area */
.canvas {
    position: relative;
    flex: 1;
    min-width: 0;
    background: #fff;
}
.plan {
    width: 100%;
    height: 100%;
}
.pl {
    fill: none;
    stroke: #b4b4b4;
    stroke-width: 0.7;
}
.pl.thick { stroke: #8f8f8f; stroke-width: 1; }
.deck { fill: url(#deck); stroke: #aaa; stroke-width: 0.7; }
.solid { fill: #a2a2a2; }
.marks { fill: none; stroke: #999; stroke-width: 2; stroke-dasharray: 1 1; }
.marks.heavy { stroke-width: 3; stroke-dasharray: 2 1; }
.marks.grid-fill { stroke-width: 2; }
.view-label {
    position: absolute;
    top: 0;
    left: 495px;
    padding: 2px 6px;
    border: 1px solid #b9c2dc;
    background: #e9edf8;
    color: #62708e;
    font: 6px/9px "Liberation Sans", sans-serif;
}
.view-btns {
    position: absolute;
    top: 3px;
    right: 5px;
    display: flex;
    gap: 2px;
}
.view-btns svg {
    width: 6px;
    height: 6px;
}
.origin {
    position: absolute;
    left: 3px;
    bottom: 3px;
    fill: none;
    stroke: #55606e;
    stroke-dasharray: 2 1;
}
.mid { stroke: #c03a60; }
.rightbars {
    display: flex;
    align-items: flex-start;
    gap: 1px;
    width: 28px;
    flex: none;
    padding-top: 3px;
    background: #edf3fa;
}
.vbar {
    display: flex;
    flex-direction: column;
    align-items: center;
    justify-content: space-between;
    width: 14px;
    padding: 0 0 3px;
    border: 1px solid #c4d2e0;
    background: #d7e4f2;
}
.vbar.edit {
    height: 187px;
    background: #dde6ee;
}
.vbar.filters {
    height: 124px;
}
.vbar svg {
    width: 9px;
    height: 9px;
}
.vbar .split {
    margin-top: 4px;
}

/* floating windows */
.float {
    position: absolute;
    display: flex;
    flex-direction: column;
    background: #fff;
    border: 1px solid #a3b4c7;
}
.float > header {
    display: flex;
    align-items: center;
    justify-content: space-between;
    padding: 0 3px;
    background: linear-gradient(#f0f6fb, #d3e1ee);
    color: #6b7784;
}
.float > header svg {
    width: 6px;
    height: 6px;
}
.wall-tools {
    left: 223px;
    top: 34px;
    width: 167px;
}
.wall-tools header {
    height: 10px;
}
.wall-tools-body {
    display: flex;
    padding: 1px 3px;
}
.stack {
    display: flex;
    flex-direction: column;
    gap: 2px;
    width: 17px;
}
.stack svg {
    width: 9px;
}
.apply {
    display: flex;
    align-items: center;
    justify-content: center;
    width: 30px;
    height: 23px;
    border: 1px solid #8b9cae;
    background: #dfe8f1;
}
.apply svg {
    width: 22px;
    height: 15px;
    border: 1px solid #a6b3c2;
    background: #eef3f8;
}
.shapes {
    display: grid;
    grid-template-columns: repeat(4, 12px);
    margin-left: 6px;
    justify-items: center;
}
.shapes svg {
    width: 11px;
    height: 11px;
    padding: 1px;
}
.shapes .on {
    outline: 1px solid #9eb0c3;
    background: #eaf1f8;
}
.rotate {
    display: flex;
    gap: 3px;
    height: 11px;
    align-items: center;
    margin-left: auto;
}
.rotate svg {
    width: 20px;
    height: 8px;
}
.bar { fill: none; stroke: #444b54; }
.turn { fill: none; stroke: #c0405a; }

.wall-dialog {
    left: 571px;
    top: 111px;
    width: 514px;
    border: 1px solid #9fb5cc;
    box-shadow: inset 0 0 0 2px #d4e2f0;
}
.wall-dialog > header {
    height: 13px;
}
.top {
    display: grid;
    grid-template-columns: 190px 1fr;
    gap: 2px;
    margin: 3px 5px 0 4px;
}
.top fieldset {
    min-width: 0;
    border: 1px solid #e8ecf0;
}
.top legend {
    line-height: 8px;
    padding-right: 1px;
}
.count {
    display: flex;
    align-items: flex-start;
    height: 32px;
    padding-left: 3px;
}
.count > span {
    flex: 1;
    padding: 2px 0 0 12px;
    font-family: "Open Sans", sans-serif;
    font-size: 5px;
    white-space: nowrap;
}
.info {
    width: 8px;
    height: 8px;
}
.count .info {
    margin: 2px 6px 0 0;
}
.spinner {
    display: flex;
    width: 28px;
    height: 11px;
    margin-top: 2px;
    border: 1px solid #c5d0dc;
}
.spinner input {
    width: 19px;
    padding-left: 4px;
}
.spinner span {
    display: grid;
    width: 8px;
    background: #c7d8e9;
}
.spinner b {
    font-size: 5px;
    line-height: 4px;
    text-align: center;
}
.radios {
    width: 59px;
    padding-top: 2px;
    color: #a0a6ad;
}
.radios label {
    display: flex;
    align-items: center;
    gap: 2px;
    height: 10px;
}
.radios input {
    appearance: none;
    width: 6px;
    height: 6px;
    border: 1px solid #b5bcc4;
    border-radius: 50%;
}
.radios input:checked {
    background: radial-gradient(#8f98a2 30%, #fff 40%);
}
.position {
    height: 111px;
    padding-left: 3px;
}
.axis {
    display: flex;
    align-items: flex-start;
}
.offsets {
    width: 33px;
}
.offsets .info {
    margin: 1px 0 3px 1px;
}
.offsets input {
    display: block;
    width: 33px;
    height: 10px;
    padding-right: 4px;
    border: 1px solid #ccd5df;
    text-align: right;
}
.section {
    width: 102px;
    height: 32px;
    margin-top: 6px;
}
.section .dots { fill: url(#dotted); stroke: #555; stroke-width: 1; stroke-dasharray: 2 1; }
.blue { fill: none; stroke: #1a1ad6; stroke-width: 2; }
.blue.side { stroke-width: 1; stroke-dasharray: 2 2; }
.layers {
    border-collapse: collapse;
    margin: 1px 0 0 -24px;
    white-space: nowrap;
}
.layers th, .layers td {
    padding: 0 0 0 5px;
    font-weight: normal;
    text-align: right;
    height: 10px;
}
.ring {
    width: 14px;
    height: 14px;
    margin: 34px 9px 0 auto;
    border: 1px solid #111;
    border-radius: 50%;
}
.total {
    display: flex;
    justify-content: flex-end;
    gap: 12px;
    padding: 6px 16px 0 0;
}
.height {
    display: flex;
    align-items: center;
    height: 18px;
    margin-top: 4px;
    padding-left: 4px;
    border: 1px solid #e8ecf0;
}
.height label {
    width: 44px;
}
.height input {
    width: 60px;
    height: 11px;
    padding-left: 12px;
    border: 1px solid #c5d0dc;
}
.preview svg {
    width: 100%;
    height: 154px;
    margin-top: 5px;
}
.sky { fill: #b8cde4; }
.ground { fill: #dfdfdf; }
.concrete { fill: #646b6d; }
.orange { fill: #e8653a; }
.wood { fill: #70321c; }
.grain { fill: none; stroke: #592512; stroke-width: 0.8; }
.woodface { fill: url(#wood); }
.wall-dialog > .tabs {
    justify-content: flex-start;
    gap: 3px;
    margin: 3px 3px 0;
}
.wall-dialog .tabs button {
    flex: none;
    height: 9px;
    padding: 0 1px;
    background: linear-gradient(#edf3f9, #c3d2e3);
}
.wall-dialog .tabs .active {
    border-color: #7fa0c4;
}
.panel {
    margin: 0 3px 0 2px;
    padding: 3px 6px 0 5px;
    border: 1px solid #c1ccd8;
}
.caption {
    display: flex;
    align-items: center;
    height: 9px;
}
.same {
    width: 75px;
    white-space: nowrap;
}
.box {
    width: 7px;
    height: 7px;
    background: #ccd8e4;
}
.react {
    width: 47px;
    margin-left: 138px;
    text-align: right;
}
.caption label {
    display: flex;
    align-items: center;
    gap: 2px;
}
.react + label {
    margin-left: 9px;
}
input[type="checkbox"] {
    appearance: none;
    width: 7px;
    height: 7px;
    border: 1px solid #93a5b8;
    background: #fff;
}
.caption input:checked {
    background: #d8e5f2;
}
.caption input:checked::after {
    content: "✓";
    display: block;
    margin-top: -2px;
    color: #2e5685;
    font-weight: bold;
}
.grid {
    height: 79px;
    margin: 6px 0 3px;
    border: 1px solid #c6d0db;
}
.grid table {
    width: 100%;
    border-collapse: collapse;
    table-layout: fixed;
    line-height: 7px;
    white-space: nowrap;
}
.grid th {
    height: 11px;
    padding: 0 0 0 4px;
    background: linear-gradient(#fff, #dce6f1);
    border-right: 1px solid #d2dce6;
    font-weight: normal;
    text-align: left;
}
.grid .snug {
    padding-left: 2px;
}
.grid td {
    height: 7px;
    padding: 0 0 0 1px;
    line-height: 7px;
    vertical-align: middle;
}
.sel td:not(:last-child) {
    background: #e5edf6;
}
.w26 { width: 26px; }
.w31 { width: 31px; }
.w37 { width: 37px; }
.w39 { width: 39px; }
.w56 { width: 56px; }
.w60 { width: 60px; }
.w72 { width: 72px; }
.w76 { width: 76px; }
.w175 { width: 175px; }
.w205 { width: 205px; }
.w208 { width: 208px; }
.w228 { width: 228px; }
.grid .tick {
    width: 6px;
    height: 6px;
    margin: 0 4px;
    border: 1px solid #444;
    vertical-align: top;
}
.tick.dot {
    background: radial-gradient(#333 20%, #fff 35%);
}
.hatch {
    display: inline-block;
    width: 8px;
    height: 7px;
    margin-right: 4px;
    vertical-align: middle;
    background: repeating-linear-gradient(45deg, #6b86a3 0 1px, #cbd8e5 1px 3px);
}
.hatch.green {
    background: repeating-linear-gradient(45deg, #7aa39b 0 1px, #dfe9e6 1px 3px);
}
.lines {
    display: inline-block;
    width: 8px;
    height: 4px;
    margin-right: 4px;
    background: #3f5d7d;
}
.stroke::after {
    content: "";
    display: inline-block;
    width: 60px;
    height: 1px;
    margin: 0 0 2px 5px;
    background: #666;
}
.sample {
    display: inline-block;
    width: 50px;
    height: 5px;
    margin-left: 8px;
    border: 1px solid #888;
}
.none {
    margin-left: 24px;
}
.far {
    margin-left: 88px;
}
.actions {
    display: flex;
    align-items: center;
    height: 14px;
    margin-bottom: 4px;
    padding-left: 2px;
}
.order {
    display: flex;
    gap: 4px;
    margin-right: 12px;
}
.order svg {
    width: 9px;
    height: 9px;
}
.catalog {
    width: 53px;
    padding-right: 12px;
    line-height: 7px;
}
.btn {
    width: 38px;
    height: 11px;
    border: 1px solid #aebccb;
    border-radius: 1px;
    background: linear-gradient(#f4f8fc, #c9d7e7);
    line-height: 9px;
    white-space: nowrap;
}
.whole {
    width: 35px;
    margin-left: 24px;
}
.comp {
    width: 38px;
    margin-left: 9px;
    font-family: "Open Sans", sans-serif;
    font-size: 5px;
    white-space: nowrap;
}
.btn.icon {
    width: 12px;
}
.btn.icon svg {
    height: 9px;
}
.wall-dialog > footer {
    display: flex;
    align-items: center;
    gap: 5px;
    height: 20px;
    padding: 0 4px;
}
.fav {
    display: flex;
    width: 81px;
    height: 11px;
    margin-right: auto;
    border: 1px solid #b5c5d5;
}
.fav select {
    flex: 1;
}
.btn.long {
    width: 68px;
}

.trade-dialog {
    left: 657px;
    top: 276px;
    width: 163px;
    padding: 0 4px 3px;
    border: 1px solid #4c6179;
    border-radius: 4px;
    background: #b5cee8;
    box-shadow: 0 1px 4px 1px rgba(40, 50, 65, 0.8), inset 0 0 0 1px #e3eef8;
}
.trade-dialog > header {
    justify-content: flex-start;
    height: 15px;
    padding: 0;
    background: none;
    color: #39424d;
}
.trade-dialog header span {
    padding-bottom: 4px;
}
.ghost {
    width: 30px;
    height: 4px;
    margin: 6px 10px 0 6px;
    background: #84a9cf;
    filter: blur(2px);
}
.tiny {
    width: 16px;
    margin-left: 0;
}
.trade-dialog header button {
    display: flex;
    justify-content: center;
    width: 23px;
    height: 9px;
    margin: 0 0 6px auto;
    border: 1px solid #a04048;
    border-top: 0;
    background: linear-gradient(#e09a96, #bd3039);
}
.client {
    border: 1px solid #8fa5bc;
    background: #fff;
}
.listbox {
    display: flex;
    height: 271px;
    margin: 1px 2px 4px;
    border: 1px solid #a2adb9;
    overflow: hidden;
}
.listbox select {
    flex: 1;
    height: 272px;
    overflow: hidden;
}
.listbox option {
    height: 9px;
    min-height: 0;
    padding: 0 2px;
    line-height: 9px;
}
.scroll {
    display: flex;
    flex-direction: column;
    width: 7px;
    color: #a5aeb8;
    text-align: center;
    font-size: 4px;
}
.scroll i {
    height: 96px;
    margin: 0 1px auto;
    border: 1px solid #c0c8d0;
}
.buttons {
    display: flex;
    align-items: center;
    justify-content: flex-end;
    gap: 3px;
    height: 17px;
    padding: 0 4px 0 6px;
    background: #dfe7f1;
}
.help {
    width: 10px;
    height: 10px;
    margin-right: auto;
    border: 1px solid #5878a0;
    border-radius: 50%;
    background: #c5d8ec;
    font-weight: bold;
    color: #234878;
    text-align: center;
}
.cursor {
    position: absolute;
    left: 773px;
    top: 288px;
    width: 6px;
    height: 10px;
    fill: #fff;
    stroke: #444;
    stroke-width: 0.8;
}

/* bottom lines */
.prompt {
    display: flex;
    height: 16px;
    flex: none;
    padding: 1px 0 1px 2px;
    border-top: 1px solid #c3ced9;
    background: #f1f5fa;
}
.prompt span {
    width: 350px;
    padding: 2px;
    border: 1px solid #d0d9e2;
    background: #fff;
    font-weight: bold;
}
.status {
    display: flex;
    align-items: center;
    gap: 2px;
    height: 10px;
    flex: none;
    border-top: 1px solid #c9d2dc;
    border-bottom: 1px solid #a0abb7;
    background: #f0f4f8;
}
.status svg {
    width: 8px;
    height: 8px;
}
.hint {
    flex: 1;
    color: #7b838c;
}
.type { width: 36px; }
.scale { width: 89px; }
.ratio { width: 46px; }
.len { width: 30px; }
.cm { width: 10px; }
.ang { width: 33px; }
.deg { width: 23px; }
.pct { width: 26px; }
.dim { color: #a4abb3; }
```
